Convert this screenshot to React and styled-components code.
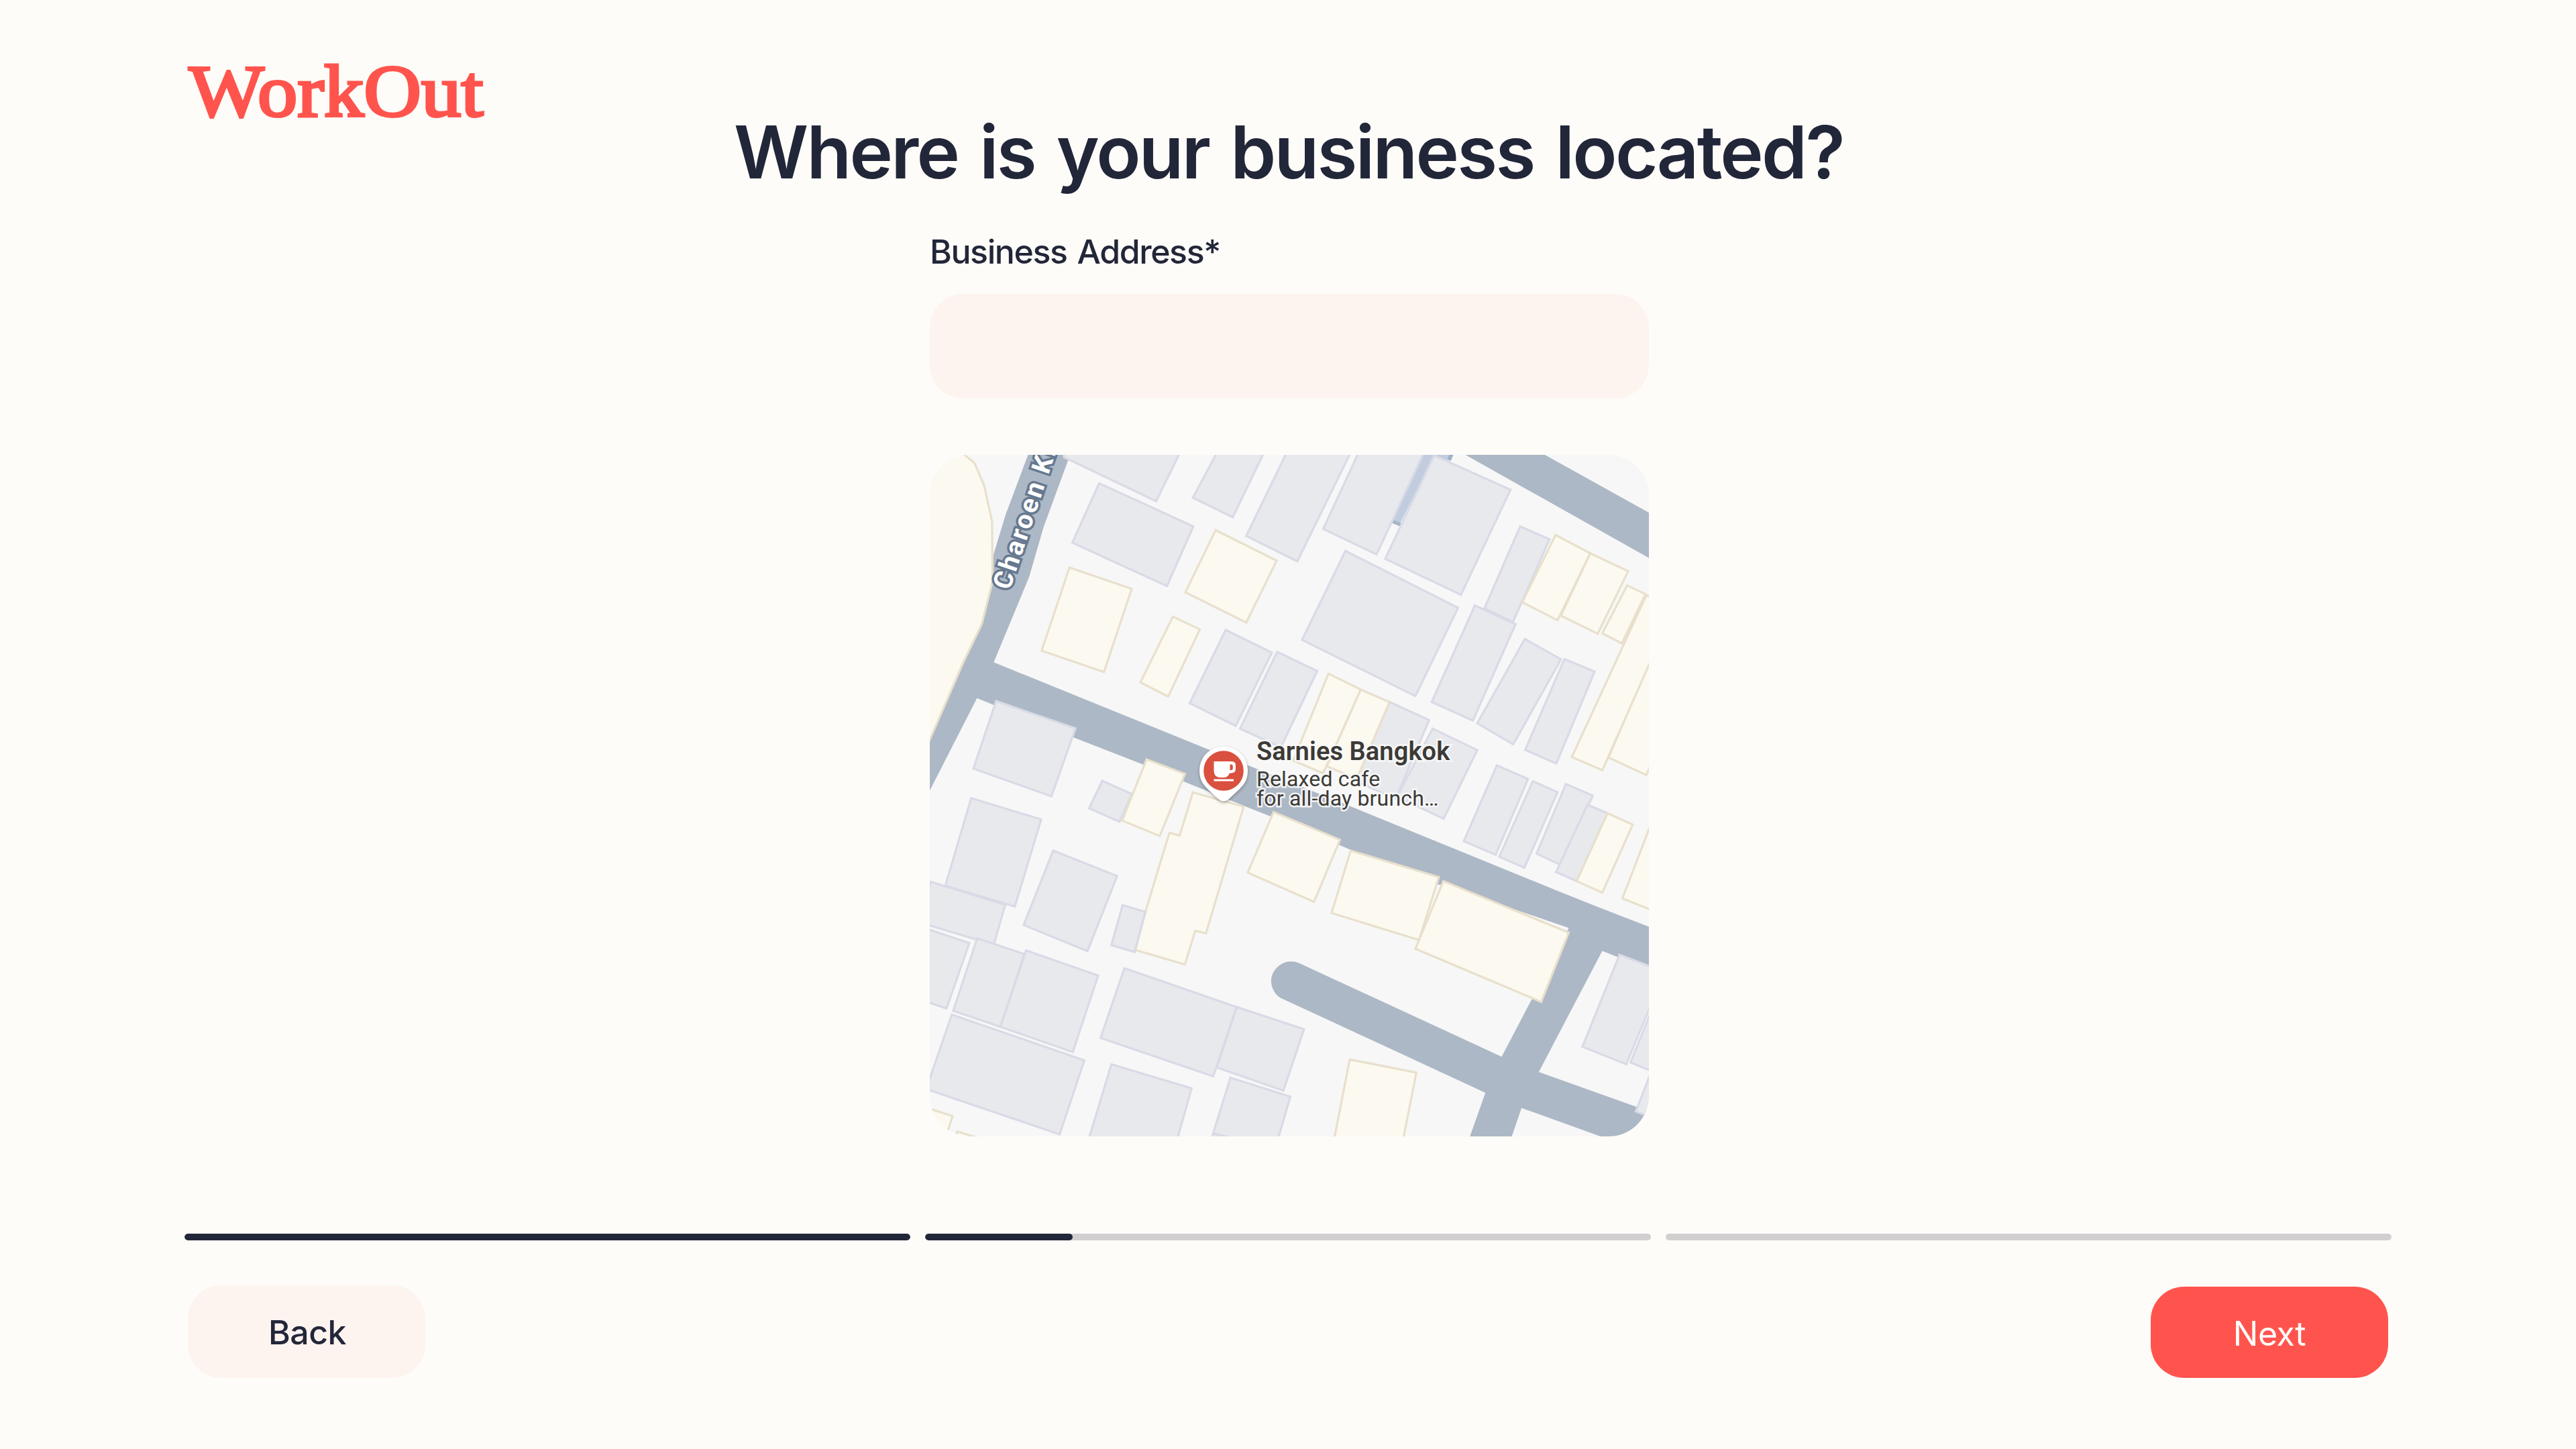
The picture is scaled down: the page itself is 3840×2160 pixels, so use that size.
import React from "react";
import styled, { createGlobalStyle } from "styled-components";

const color = {
  page: "#fefcf8",
  ink: "#222639",
  coral: "#ff544d",
  blush: "#fdf3ef",
  track: "#d2cfd0",
  ground: "#f7f7f7",
  road: "#adb8c6",
};

const GlobalStyle = createGlobalStyle`
  * { box-sizing: border-box; }
  body { margin: 0; background: ${color.page}; }
`;

const Page = styled.main`
  display: flex;
  flex-direction: column;
  width: 3840px;
  height: 2160px;
  padding: 85px 275px 106px;
  overflow: hidden;
  background: ${color.page};
  color: ${color.ink};
  font-family: Inter, "Liberation Sans", sans-serif;
`;

const Logo = styled.div`
  padding-left: 6px;
  height: 99px;
  color: ${color.coral};
  font: 400 111px/102px "Liberation Serif", serif;
  -webkit-text-stroke: 4px ${color.coral};
  stroke-linejoin: round;
  transform: scaleX(1.07);
  transform-origin: 0 0;
`;

const Title = styled.h1`
  align-self: center;
  margin: 0;
  padding-left: 2px;
  font-size: 109px;
  font-weight: 600;
  line-height: 85px;
  height: 84px;
  letter-spacing: -2.7px;
  word-spacing: 7px;
  white-space: nowrap;
`;

const Form = styled.section`
  display: flex;
  flex-direction: column;
  width: 1072px;
  margin: 77px 0 0 1111px;
`;

const Label = styled.label`
  font-size: 50px;
  font-weight: 500;
  line-height: 60px;
  letter-spacing: -1.4px;
  word-spacing: 3px;
`;

const AddressInput = styled.input`
  height: 156px;
  margin: 33px 0 84px;
  padding: 0 48px;
  border: 0;
  border-radius: 50px;
  outline: 0;
  background: ${color.blush};
  color: inherit;
  font: inherit;
  font-size: 50px;
`;

const MapCard = styled.div`
  position: relative;
  height: 1016px;
  overflow: hidden;
  border-radius: 60px;
  background: ${color.ground};
`;

const MapDrawing = styled.svg`
  display: block;
  width: 100%;
  height: 100%;

  polygon, path { vector-effect: non-scaling-stroke; }
`;

const Road = styled.path`
  fill: ${color.road};
`;

const Building = styled.polygon`
  fill: ${(p) => (p.$shop ? "#fcf9f0" : "#e8e9ed")};
  stroke: ${(p) => (p.$shop ? "#e8e0cc" : "#d9dae6")};
  stroke-width: 3.2px;
`;

const StreetName = styled.span`
  position: absolute;
  left: 119px;
  top: 170px;
  color: #fff;
  font: 700 39px/40px Roboto, sans-serif;
  letter-spacing: 3.2px;
  white-space: nowrap;
  -webkit-text-stroke: 7px #66788f;
  paint-order: stroke fill;
  transform: rotate(-71.5deg);
  transform-origin: 0 33px;
`;

const Pin = styled.svg`
  position: absolute;
  left: 396px;
  top: 430px;
  width: 84px;
  height: 94px;
  filter: drop-shadow(0 2px 2px rgba(60, 60, 60, 0.45));
`;

const Place = styled.div`
  position: absolute;
  left: 487px;
  top: 419px;
  color: #3c3a36;
  font: 400 32px/29px Roboto, sans-serif;
  white-space: nowrap;
  -webkit-text-stroke: 5px rgba(250, 250, 250, 0.9);
  paint-order: stroke fill;
`;

const PlaceName = styled.div`
  margin-bottom: 4px;
  font-size: 38px;
  font-weight: 600;
  line-height: 46px;
  letter-spacing: 0.1px;
`;

const PlaceNote = styled.div`
  letter-spacing: 0.18px;
`;

const Steps = styled.div`
  display: grid;
  grid-template-columns: repeat(3, 1fr);
  gap: 22px;
  margin-top: 145px;
`;

const Step = styled.div`
  height: 10px;
  overflow: hidden;
  border-radius: 5px;
  background: ${color.track};
`;

const StepFill = styled.div`
  width: ${(p) => p.$width};
  height: 100%;
  border-radius: 5px;
  background: ${color.ink};
`;

const Actions = styled.footer`
  display: flex;
  justify-content: space-between;
  align-items: flex-end;
  margin-top: 67px;
  padding: 0 5px;
`;

const Button = styled.button`
  width: 354px;
  height: ${(p) => (p.$primary ? "136px" : "138px")};
  padding: ${(p) => (p.$primary ? "4px 0 0 0" : "2px 0 0 2px")};
  border: 0;
  border-radius: 50px;
  background: ${(p) => (p.$primary ? color.coral : color.blush)};
  color: ${(p) => (p.$primary ? "#fff" : color.ink)};
  font-family: inherit;
  font-size: 50px;
  font-weight: ${(p) => (p.$primary ? 400 : 500)};
  letter-spacing: -0.5px;
`;

const roads = [
  "M455 52 L362 310 L312 480 L300 620 L262 785 L185 950 L45 1285 V1505 L242 1105 L320 1138 L645 1275 L945 1396 L1110 1468 L1365 1575 L1480 1622 L1757 1742 L1802 1762 L2167 1912 L2200 1918 L2712 2100 L2557 2410 L2432 2657 L1587 2252 Q1572 2245 1550 2245 C1512 2245 1470 2282 1470 2330 C1470 2360 1487 2390 1510 2403 L2364 2813 L2290 3030 H2465 L2515 2879 L2847 3003 L3060 3080 V2898 L2997 2875 L2587 2723 L2852 2199 L3060 2285 V2100 L2832 2008 L2667 1940 L1812 1578 L1215 1330 L312 950 L460 580 L520 365 L635 40 H455 Z",
  "M2260 40 L3060 506 V310 L2600 45 Z",
];

const blocks = [
  {
    at: [0, 0],
    homes: [
      "605,62 990,253 1100,20 605,20",
      "1255,20 1143,238 1310,322 1450,20",
      "1545,20 1366,403 1579,513 1812,20",
      "752,175 1145,362 1035,620 640,432",
      "1280,810 1473,908 1322,1225 1130,1127",
      "1495,905 1662,988 1510,1318 1340,1237",
      "322,1118 653,1236 553,1530 227,1410",
      "765,1463 888,1520 837,1640 710,1582",
    ],
    shops: [
      "628,540 888,632 772,992 512,900",
      "1238,378 1493,510 1366,778 1112,647",
      "1060,752 1172,808 1040,1098 924,1037",
      "950,1370 1110,1433 1005,1702 848,1635",
    ],
  },
  {
    at: [1512, 0],
    homes: [
      "333,20 175,373 398,483 605,20",
      "997,362 1120,417 967,775 848,717",
      "638,55 957,203 750,658 434,502",
      "268,468 738,714 560,1096 87,853",
      "808,704 978,785 800,1202 628,1122",
      "1017,849 1168,937 968,1305 818,1214",
      "1182,936 1308,990 1148,1388 1018,1329",
      "452,1122 617,1200 478,1540 310,1465",
      "632,1237 818,1330 678,1627 483,1532",
      "900,1396 1030,1455 895,1783 762,1724",
      "1050,1465 1153,1512 1015,1839 910,1792",
      "1188,1477 1300,1527 1172,1830 1066,1778",
      "1278,1567 1362,1603 1233,1897 1147,1858",
    ],
    shops: [
      "1145,399 1290,478 1153,768 1006,690",
      "1290,478 1448,556 1321,826 1167,748",
      "1444,617 1520,655 1422,868 1340,825",
      "1555,905 1366,1362 1524,1438 1640,1160",
      "1524,660 1640,715 1340,1417 1213,1360",
      "197,999 332,1068 175,1430 50,1376",
      "332,1068 452,1122 315,1455 190,1400",
      "1362,1603 1467,1653 1340,1947 1233,1897",
      "1545,1645 1424,1972 1560,2028 1680,1700",
    ],
  },
  {
    at: [0, 1510],
    homes: [
      "218,28 510,120 400,497 110,407",
      "50,390 360,490 312,662 -10,562",
      "-40,568 210,655 115,938 -40,885",
      "243,635 440,703 340,1018 143,948",
      "447,687 748,796 642,1127 340,1018",
      "560,255 827,365 703,690 437,577",
      "137,965 690,1163 587,1483 30,1287",
      "857,764 1326,932 1228,1232 758,1066",
      "1326,932 1607,1028 1521,1294 1243,1194",
      "803,1180 1138,1284 1065,1550 695,1550",
      "1228,1478 1400,1532 1400,1600 1210,1560",
      "1300,1238 1550,1320 1485,1550 1228,1478",
    ],
    shops: [
      "1143,3 1355,65 1198,613 1153,602 1110,748 903,685 945,520 1045,178 1088,190",
      "1480,88 1757,208 1649,477 1372,350",
      "0,1357 140,1404 105,1520 0,1520",
      "160,1471 260,1503 260,1560 150,1503",
    ],
  },
  {
    at: [0, 1510],
    homes: ["850,491 945,520 900,694 803,664"],
    shops: [],
  },
  {
    at: [1512, 1510],
    homes: [
      "1412,706 1600,780 1440,1180 1257,1104",
      "1560,910 1458,1172 1560,1215",
      "1560,1170 1480,1384 1560,1415",
    ],
    shops: [
      "290,255 658,370 575,642 210,525",
      "677,387 1200,610 1085,910 560,680",
      "286,1159 564,1216 500,1550 212,1550",
    ],
  },
];

function Block({ at, homes, shops }) {
  return (
    <g transform={`translate(${at[0]} ${at[1]})`}>
      {homes.map((p) => <Building key={p} points={p} />)}
      {shops.map((p) => <Building key={p} points={p} $shop />)}
    </g>
  );
}

function StreetMap() {
  return (
    <MapCard>
      <MapDrawing viewBox="45 52 3001.6 2950" preserveAspectRatio="none">
        {roads.map((d) => <Road key={d} d={d} />)}
        <path
          d="M20 52 L190 52 L232 88 L272 185 L305 340 L307 600 L262 785 L185 950 L45 1285 L20 1345 Z"
          fill="#fcf9f0"
          stroke="#e8e0cc"
          strokeWidth="3.2"
        />
        <path d="M2105 40 H2160 L2009 347 L2007 360 L1973 345 Z" fill="#c1cdde" />
        <path d="M1984 335 L2012 347 L2007 361 L1973 347 Z" fill="#a6b5c8" />
        <path d="M2140 40 H2226 L2217 78 L2150 60 Z" fill="#c1cdde" />
        <path d="M2212 52 H2230 L2220 78 L2206 71 Z" fill="#a0b1c5" />
        {blocks.map((b, i) => <Block key={i} {...b} />)}
      </MapDrawing>
      <StreetName>Charoen Kr</StreetName>
      <Pin viewBox="0 0 84 94">
        <path d="M42 5 C21 5 6 21 6 41 C6 55 12 62 19 69 L34 83 Q42 90 50 83 L65 69 C72 62 78 55 78 41 C78 21 63 5 42 5 Z" fill="#fff" />
        <circle cx="42" cy="41" r="29.8" fill="#d9503f" />
        <path d="M27.5 27 H54 Q60 27 60 33 V38 Q60 44.5 53 44.5 H51 Q48.5 51 43 51 H36 Q27.5 50 27.5 41 Z M51.5 31.5 V40 H53.5 Q55.8 40 55.8 37.5 V34 Q55.8 31.5 53.5 31.5 Z" fill="#fff" fillRule="evenodd" />
        <rect x="27.5" y="53.5" width="29.5" height="3" fill="#fff" />
      </Pin>
      <Place>
        <PlaceName>Sarnies Bangkok</PlaceName>
        <PlaceNote>Relaxed cafe</PlaceNote>
        <PlaceNote>for all-day brunch…</PlaceNote>
      </Place>
    </MapCard>
  );
}

const progress = ["100%", "220px", "0"];

export default function App() {
  return (
    <Page>
      <GlobalStyle />
      <Logo>WorkOut</Logo>
      <Title>Where is your business located?</Title>
      <Form>
        <Label htmlFor="address">Business Address*</Label>
        <AddressInput id="address" />
        <StreetMap />
      </Form>
      <Steps>
        {progress.map((width, i) => (
          <Step key={i}><StepFill $width={width} /></Step>
        ))}
      </Steps>
      <Actions>
        <Button>Back</Button>
        <Button $primary>Next</Button>
      </Actions>
    </Page>
  );
}
